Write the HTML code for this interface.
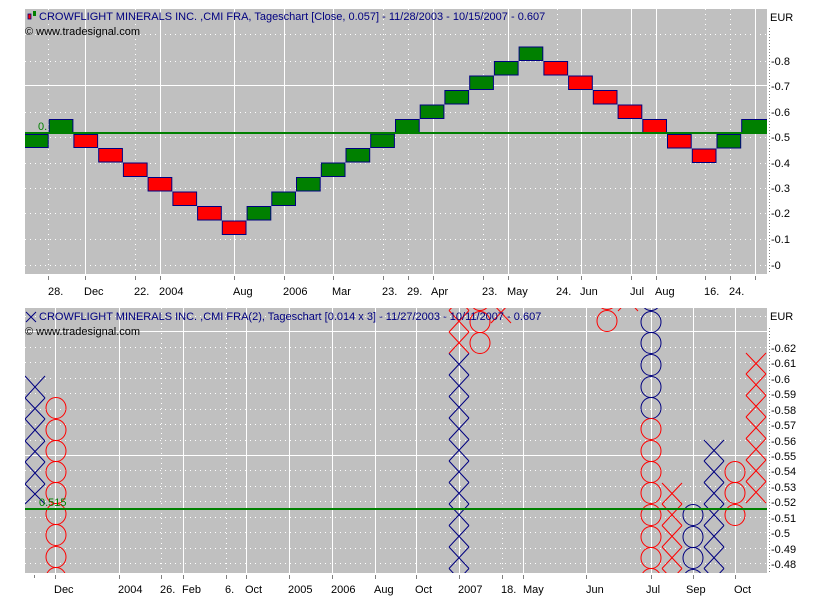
<!DOCTYPE html>
<html><head><meta charset="utf-8"><style>
html,body{margin:0;padding:0;background:#fff;width:826px;height:606px;overflow:hidden}
svg{display:block}
text{font-family:"Liberation Sans","DejaVu Sans",sans-serif;font-size:11px}
</style></head><body>
<svg width="826" height="606" viewBox="0 0 826 606" xmlns="http://www.w3.org/2000/svg">
<defs>
<clipPath id="c1"><rect x="25" y="9" width="742" height="265"/></clipPath>
<clipPath id="c2"><rect x="25" y="308" width="742" height="265"/></clipPath>
</defs>
<!-- TOP CHART -->
<rect x="25" y="9" width="742" height="265" fill="#c0c0c0"/>
<g stroke="#fff" stroke-width="1" stroke-dasharray="1,4">
<line x1="25" y1="34.5" x2="767" y2="34.5"/><line x1="25" y1="61.5" x2="767" y2="61.5"/>
<line x1="25" y1="112.5" x2="767" y2="112.5"/><line x1="25" y1="137.5" x2="767" y2="137.5"/>
<line x1="25" y1="163.5" x2="767" y2="163.5"/><line x1="25" y1="188.5" x2="767" y2="188.5"/>
<line x1="25" y1="213.5" x2="767" y2="213.5"/><line x1="25" y1="239.5" x2="767" y2="239.5"/>
<line x1="25" y1="265.5" x2="767" y2="265.5"/>
<line x1="48.5" y1="9" x2="48.5" y2="274"/><line x1="135.5" y1="9" x2="135.5" y2="274"/>
<line x1="383.5" y1="9" x2="383.5" y2="274"/><line x1="408.5" y1="9" x2="408.5" y2="274"/>
<line x1="483.5" y1="9" x2="483.5" y2="274"/><line x1="557.5" y1="9" x2="557.5" y2="274"/>
<line x1="705.5" y1="9" x2="705.5" y2="274"/><line x1="730.5" y1="9" x2="730.5" y2="274"/>
</g>
<g stroke="#fff" stroke-width="1">
<line x1="25" y1="85.5" x2="767" y2="85.5"/>
<line x1="85.5" y1="9" x2="85.5" y2="274"/><line x1="160.5" y1="9" x2="160.5" y2="274"/>
<line x1="234.5" y1="9" x2="234.5" y2="274"/><line x1="284.5" y1="9" x2="284.5" y2="274"/>
<line x1="333.5" y1="9" x2="333.5" y2="274"/><line x1="433.5" y1="9" x2="433.5" y2="274"/>
<line x1="508.5" y1="9" x2="508.5" y2="274"/><line x1="581.5" y1="9" x2="581.5" y2="274"/>
<line x1="631.5" y1="9" x2="631.5" y2="274"/><line x1="656.5" y1="9" x2="656.5" y2="274"/>
<line x1="755.5" y1="9" x2="755.5" y2="274"/>
</g>
<g clip-path="url(#c1)" stroke="#000080" stroke-width="1">
<rect x="24.5" y="134.5" width="23.7" height="13" fill="#008000"/>
<rect x="49.2" y="119.5" width="23.7" height="13" fill="#008000"/>
<rect x="73.9" y="134.5" width="23.7" height="13" fill="#ff0000"/>
<rect x="98.7" y="148.5" width="23.7" height="13.5" fill="#ff0000"/>
<rect x="123.4" y="163" width="23.7" height="13.5" fill="#ff0000"/>
<rect x="148.1" y="177.5" width="23.7" height="13.5" fill="#ff0000"/>
<rect x="172.9" y="192" width="23.7" height="13.5" fill="#ff0000"/>
<rect x="197.6" y="206.5" width="23.7" height="13.5" fill="#ff0000"/>
<rect x="222.3" y="221" width="23.7" height="13.5" fill="#ff0000"/>
<rect x="247.1" y="206.5" width="23.7" height="13.5" fill="#008000"/>
<rect x="271.8" y="192" width="23.7" height="13.5" fill="#008000"/>
<rect x="296.5" y="177.5" width="23.7" height="13.5" fill="#008000"/>
<rect x="321.3" y="163" width="23.7" height="13.5" fill="#008000"/>
<rect x="346" y="148.5" width="23.7" height="13.5" fill="#008000"/>
<rect x="370.7" y="134" width="23.7" height="13.5" fill="#008000"/>
<rect x="395.5" y="119.5" width="23.7" height="13.5" fill="#008000"/>
<rect x="420.2" y="105" width="23.7" height="13.5" fill="#008000"/>
<rect x="444.9" y="90.5" width="23.7" height="13.5" fill="#008000"/>
<rect x="469.7" y="76" width="23.7" height="13.5" fill="#008000"/>
<rect x="494.4" y="61.5" width="23.7" height="13.5" fill="#008000"/>
<rect x="519.1" y="47" width="23.7" height="13.5" fill="#008000"/>
<rect x="543.9" y="61.5" width="23.7" height="13.5" fill="#ff0000"/>
<rect x="568.6" y="76" width="23.7" height="13.5" fill="#ff0000"/>
<rect x="593.3" y="90.5" width="23.7" height="13.5" fill="#ff0000"/>
<rect x="618.1" y="105" width="23.7" height="13.5" fill="#ff0000"/>
<rect x="642.8" y="119.5" width="23.7" height="13.5" fill="#ff0000"/>
<rect x="667.5" y="134.5" width="23.7" height="13.5" fill="#ff0000"/>
<rect x="692.3" y="149" width="23.7" height="13.5" fill="#ff0000"/>
<rect x="717" y="134.5" width="23.7" height="13.5" fill="#008000"/>
<rect x="741.7" y="119.5" width="26" height="13" fill="#008000"/>
</g>
<line x1="25" y1="133" x2="767" y2="133" stroke="#008000" stroke-width="2"/>
<text x="38" y="130" fill="#008000">0.</text>
<rect x="28" y="14" width="3" height="5" fill="#ff0000" stroke="#000080" stroke-width="0.8"/>
<rect x="33" y="11" width="3" height="5" fill="#008000"/>
<text x="39" y="20" fill="#000080">CROWFLIGHT MINERALS INC. ,CMI FRA, Tageschart [Close, 0.057] - 11/28/2003 - 10/15/2007 - 0.607</text>
<text x="25" y="35" fill="#000">© www.tradesignal.com</text>
<!-- top right axis -->
<line x1="769.5" y1="28" x2="769.5" y2="274" stroke="#808080" stroke-dasharray="1,2"/>
<g fill="#000">
<text x="770" y="21">EUR</text>
<text x="771" y="65">-0.8</text><text x="771" y="90">-0.7</text><text x="771" y="116">-0.6</text>
<text x="771" y="141">-0.5</text><text x="771" y="167">-0.4</text><text x="771" y="192">-0.3</text>
<text x="771" y="217">-0.2</text><text x="771" y="243">-0.1</text><text x="771" y="269">-0</text>
</g>
<g stroke="#808080">
<line x1="48.5" y1="276" x2="48.5" y2="280"/><line x1="85.5" y1="276" x2="85.5" y2="280"/>
<line x1="135.5" y1="276" x2="135.5" y2="280"/><line x1="160.5" y1="276" x2="160.5" y2="280"/>
<line x1="234.5" y1="276" x2="234.5" y2="280"/><line x1="284.5" y1="276" x2="284.5" y2="280"/>
<line x1="333.5" y1="276" x2="333.5" y2="280"/><line x1="383.5" y1="276" x2="383.5" y2="280"/>
<line x1="408.5" y1="276" x2="408.5" y2="280"/><line x1="433.5" y1="276" x2="433.5" y2="280"/>
<line x1="483.5" y1="276" x2="483.5" y2="280"/><line x1="508.5" y1="276" x2="508.5" y2="280"/>
<line x1="557.5" y1="276" x2="557.5" y2="280"/><line x1="581.5" y1="276" x2="581.5" y2="280"/>
<line x1="631.5" y1="276" x2="631.5" y2="280"/><line x1="656.5" y1="276" x2="656.5" y2="280"/>
<line x1="705.5" y1="276" x2="705.5" y2="280"/><line x1="730.5" y1="276" x2="730.5" y2="280"/>
<line x1="755.5" y1="276" x2="755.5" y2="280"/>
</g>
<g fill="#000">
<text x="48" y="295">28.</text><text x="84" y="295">Dec</text><text x="134" y="295">22.</text>
<text x="159" y="295">2004</text><text x="233" y="295">Aug</text><text x="283" y="295">2006</text>
<text x="332" y="295">Mar</text><text x="382" y="295">23.</text><text x="407" y="295">29.</text>
<text x="431" y="295">Apr</text><text x="482" y="295">23.</text><text x="507" y="295">May</text>
<text x="556" y="295">24.</text><text x="580" y="295">Jun</text><text x="630" y="295">Jul</text>
<text x="655" y="295">Aug</text><text x="704" y="295">16.</text><text x="729" y="295">24.</text>
</g>

<!-- BOTTOM CHART -->
<rect x="25" y="308" width="742" height="265" fill="#c0c0c0"/>
<g stroke="#fff" stroke-width="1" stroke-dasharray="1,4">
<line x1="25" y1="316.5" x2="767" y2="316.5"/><line x1="25" y1="347.5" x2="767" y2="347.5"/>
<line x1="25" y1="362.5" x2="767" y2="362.5"/><line x1="25" y1="378.5" x2="767" y2="378.5"/>
<line x1="25" y1="393.5" x2="767" y2="393.5"/><line x1="25" y1="409.5" x2="767" y2="409.5"/>
<line x1="25" y1="424.5" x2="767" y2="424.5"/><line x1="25" y1="440.5" x2="767" y2="440.5"/>
<line x1="25" y1="470.5" x2="767" y2="470.5"/><line x1="25" y1="486.5" x2="767" y2="486.5"/>
<line x1="25" y1="501.5" x2="767" y2="501.5"/><line x1="25" y1="517.5" x2="767" y2="517.5"/>
<line x1="25" y1="532.5" x2="767" y2="532.5"/><line x1="25" y1="548.5" x2="767" y2="548.5"/>
<line x1="25" y1="563.5" x2="767" y2="563.5"/>
<line x1="161.5" y1="308" x2="161.5" y2="573"/><line x1="226.5" y1="308" x2="226.5" y2="573"/>
<line x1="502.5" y1="308" x2="502.5" y2="573"/>
</g>
<g stroke="#fff" stroke-width="1">
<line x1="25" y1="331.5" x2="767" y2="331.5"/><line x1="25" y1="455.5" x2="767" y2="455.5"/>
<line x1="55.5" y1="308" x2="55.5" y2="573"/><line x1="119.5" y1="308" x2="119.5" y2="573"/>
<line x1="183.5" y1="308" x2="183.5" y2="573"/><line x1="246.5" y1="308" x2="246.5" y2="573"/>
<line x1="289.5" y1="308" x2="289.5" y2="573"/><line x1="332.5" y1="308" x2="332.5" y2="573"/>
<line x1="375.5" y1="308" x2="375.5" y2="573"/><line x1="416.5" y1="308" x2="416.5" y2="573"/>
<line x1="459.5" y1="308" x2="459.5" y2="573"/><line x1="523.5" y1="308" x2="523.5" y2="573"/>
<line x1="586.5" y1="308" x2="586.5" y2="573"/><line x1="651.5" y1="308" x2="651.5" y2="573"/>
<line x1="693.5" y1="308" x2="693.5" y2="573"/><line x1="735.5" y1="308" x2="735.5" y2="573"/>
</g>
<g clip-path="url(#c2)" fill="none" stroke-width="1">
<!-- col 35 navy X -->
<path stroke="#000080" d="M25,376 l20,22 M45,376 l-20,22 M25,398 l20,21 M45,398 l-20,21 M25,419 l20,22 M45,419 l-20,22 M25,441 l20,21 M45,441 l-20,21 M25,462 l20,22 M45,462 l-20,22 M25,484 l20,20 M45,484 l-20,20"/>
<!-- col 56 red O -->
<g stroke="#ff0000">
<ellipse cx="56" cy="408" rx="10" ry="10.5"/><ellipse cx="56" cy="430" rx="10" ry="10.5"/>
<ellipse cx="56" cy="451" rx="10" ry="10.5"/><ellipse cx="56" cy="472" rx="10" ry="10.5"/>
<ellipse cx="56" cy="493" rx="10" ry="10.5"/><ellipse cx="56" cy="514" rx="10" ry="10.5"/>
<ellipse cx="56" cy="535" rx="10" ry="10.5"/><ellipse cx="56" cy="557" rx="10" ry="10.5"/>
<ellipse cx="56" cy="578" rx="10" ry="10.5"/>
</g>
<!-- col 459 X -->
<path stroke="#ff0000" d="M449,289 l20,21.5 M469,289 l-20,21.5 M449,310.5 l20,21.5 M469,310.5 l-20,21.5 M449,332 l20,21.5 M469,332 l-20,21.5"/>
<path stroke="#000080" d="M449,353.5 l20,21.5 M469,353.5 l-20,21.5 M449,375 l20,21.5 M469,375 l-20,21.5 M449,396.5 l20,21.5 M469,396.5 l-20,21.5 M449,418 l20,21.5 M469,418 l-20,21.5 M449,439.5 l20,21.5 M469,439.5 l-20,21.5 M449,461 l20,21.5 M469,461 l-20,21.5 M449,482.5 l20,21.5 M469,482.5 l-20,21.5 M449,504 l20,21.5 M469,504 l-20,21.5 M449,525.5 l20,21.5 M469,525.5 l-20,21.5 M449,547 l20,21.5 M469,547 l-20,21.5 M449,568.5 l20,21.5 M469,568.5 l-20,21.5"/>
<g stroke="#ff0000">
<ellipse cx="480" cy="300" rx="10" ry="10.5"/><ellipse cx="480" cy="322" rx="10" ry="10.5"/><ellipse cx="480" cy="343" rx="10" ry="10.5"/>
<path d="M491,302 l20,21 M511,302 l-20,21 M491,280 l20,22 M511,280 l-20,22"/>
<ellipse cx="607" cy="321" rx="10" ry="10.5"/><ellipse cx="607" cy="299" rx="10" ry="10.5"/>
<path d="M618,290 l20,21 M638,290 l-20,21"/>
</g>
<!-- col 651 O -->
<g stroke="#000080">
<ellipse cx="651" cy="300" rx="10" ry="10.5"/><ellipse cx="651" cy="322" rx="10" ry="10.5"/>
<ellipse cx="651" cy="343" rx="10" ry="10.5"/><ellipse cx="651" cy="365" rx="10" ry="10.5"/>
<ellipse cx="651" cy="387" rx="10" ry="10.5"/><ellipse cx="651" cy="408" rx="10" ry="10.5"/>
</g>
<g stroke="#ff0000">
<ellipse cx="651" cy="429" rx="10" ry="10.5"/><ellipse cx="651" cy="451" rx="10" ry="10.5"/>
<ellipse cx="651" cy="472" rx="10" ry="10.5"/><ellipse cx="651" cy="493" rx="10" ry="10.5"/>
<ellipse cx="651" cy="515" rx="10" ry="10.5"/><ellipse cx="651" cy="537" rx="10" ry="10.5"/>
<ellipse cx="651" cy="558" rx="10" ry="10.5"/><ellipse cx="651" cy="579" rx="10" ry="10.5"/>
<path d="M662,483 l20,21 M682,483 l-20,21 M662,504 l20,21.5 M682,504 l-20,21.5 M662,525.5 l20,21.5 M682,525.5 l-20,21.5 M662,547 l20,21.5 M682,547 l-20,21.5 M662,568.5 l20,21.5 M682,568.5 l-20,21.5"/>
</g>
<g stroke="#000080">
<ellipse cx="693" cy="515" rx="10" ry="10.5"/><ellipse cx="693" cy="537" rx="10" ry="10.5"/>
<ellipse cx="693" cy="558" rx="10" ry="10.5"/><ellipse cx="693" cy="580" rx="10" ry="10.5"/>
<path d="M704,440 l20,21 M724,440 l-20,21 M704,461 l20,21.5 M724,461 l-20,21.5 M704,482.5 l20,21.5 M724,482.5 l-20,21.5 M704,504 l20,21.5 M724,504 l-20,21.5 M704,525.5 l20,21.5 M724,525.5 l-20,21.5 M704,547 l20,21.5 M724,547 l-20,21.5 M704,568.5 l20,21.5 M724,568.5 l-20,21.5"/>
</g>
<g stroke="#ff0000">
<ellipse cx="735" cy="472" rx="10" ry="10.5"/><ellipse cx="735" cy="493" rx="10" ry="10.5"/>
<ellipse cx="735" cy="515" rx="10" ry="10.5"/>
<path d="M746,353 l20,21 M766,353 l-20,21 M746,374 l20,21.5 M766,374 l-20,21.5 M746,395.5 l20,21.5 M766,395.5 l-20,21.5 M746,417 l20,21.5 M766,417 l-20,21.5 M746,438.5 l20,21.5 M766,438.5 l-20,21.5 M746,460 l20,21.5 M766,460 l-20,21.5 M746,481.5 l20,21.5 M766,481.5 l-20,21.5"/>
</g>
</g>
<line x1="25" y1="509" x2="767" y2="509" stroke="#008000" stroke-width="2"/>
<text x="39" y="506" fill="#008000">0.515</text>
<path d="M26,312 l10,10 M36,312 l-10,10" stroke="#000080" fill="none"/>
<text x="39" y="320" fill="#000080">CROWFLIGHT MINERALS INC. ,CMI FRA(2), Tageschart [0.014 x 3] - 11/27/2003 - 10/11/2007 - 0.607</text>
<text x="25" y="335" fill="#000">© www.tradesignal.com</text>
<line x1="769.5" y1="328" x2="769.5" y2="573" stroke="#808080" stroke-dasharray="1,2"/>
<g fill="#000">
<text x="770" y="320">EUR</text>
<text x="771" y="352">-0.62</text><text x="771" y="367">-0.61</text><text x="771" y="383">-0.6</text>
<text x="771" y="398">-0.59</text><text x="771" y="414">-0.58</text><text x="771" y="429">-0.57</text>
<text x="771" y="445">-0.56</text><text x="771" y="460">-0.55</text><text x="771" y="475">-0.54</text>
<text x="771" y="491">-0.53</text><text x="771" y="506">-0.52</text><text x="771" y="522">-0.51</text>
<text x="771" y="537">-0.5</text><text x="771" y="553">-0.49</text><text x="771" y="568">-0.48</text>
</g>
<g stroke="#808080">
<line x1="34.5" y1="575" x2="34.5" y2="578"/><line x1="55.5" y1="575" x2="55.5" y2="579"/>
<line x1="119.5" y1="575" x2="119.5" y2="579"/><line x1="161.5" y1="575" x2="161.5" y2="579"/>
<line x1="183.5" y1="575" x2="183.5" y2="579"/><line x1="226.5" y1="575" x2="226.5" y2="579"/>
<line x1="246.5" y1="575" x2="246.5" y2="579"/><line x1="289.5" y1="575" x2="289.5" y2="579"/>
<line x1="332.5" y1="575" x2="332.5" y2="579"/><line x1="375.5" y1="575" x2="375.5" y2="579"/>
<line x1="416.5" y1="575" x2="416.5" y2="579"/><line x1="459.5" y1="575" x2="459.5" y2="579"/>
<line x1="502.5" y1="575" x2="502.5" y2="579"/><line x1="523.5" y1="575" x2="523.5" y2="579"/>
<line x1="586.5" y1="575" x2="586.5" y2="579"/><line x1="651.5" y1="575" x2="651.5" y2="579"/>
<line x1="693.5" y1="575" x2="693.5" y2="579"/><line x1="735.5" y1="575" x2="735.5" y2="579"/>
</g>
<g fill="#000">
<text x="54" y="593">Dec</text><text x="118" y="593">2004</text><text x="160" y="593">26.</text>
<text x="182" y="593">Feb</text><text x="225" y="593">6.</text><text x="245" y="593">Oct</text>
<text x="288" y="593">2005</text><text x="331" y="593">2006</text><text x="374" y="593">Aug</text>
<text x="415" y="593">Oct</text><text x="458" y="593">2007</text><text x="501" y="593">18.</text>
<text x="523" y="593">May</text><text x="586" y="593">Jun</text><text x="646" y="593">Jul</text>
<text x="686" y="593">Sep</text><text x="734" y="593">Oct</text>
</g>
</svg>
</body></html>
